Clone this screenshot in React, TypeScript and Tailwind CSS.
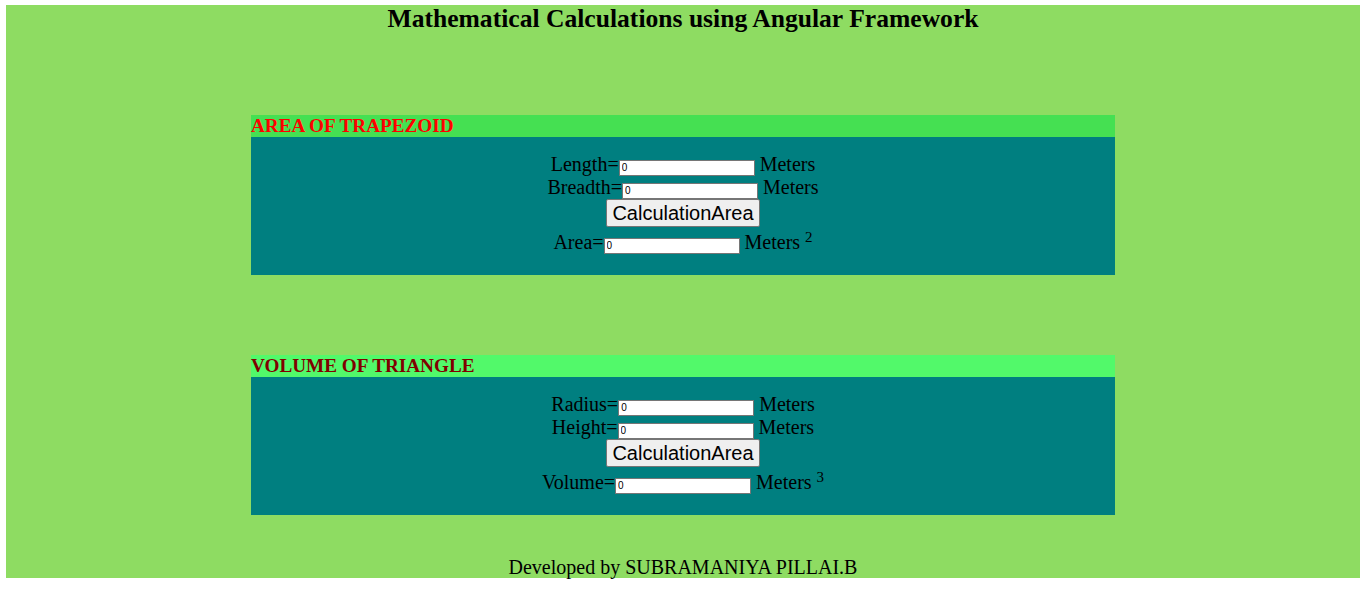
import React from "react";

const serif = "font-['Liberation_Serif','Times_New_Roman',serif]";

type Field = { label: string; unit?: string };

function Row({ label, sup }: { label: string; sup?: string }) {
  return (
    <div className={sup ? "pt-[4px]" : ""}>
      {label}=
      <input
        readOnly
        defaultValue="0"
        className="h-[16px] w-[136px] border border-[#767676] bg-white px-[2px] align-baseline font-['Liberation_Sans',Arial,sans-serif] text-[10px] leading-none text-black outline-none"
      />{" "}
      Meters{sup && <> <sup>{sup}</sup></>}
    </div>
  );
}

function Panel({
  title,
  titleClass,
  headBg,
  fields,
  result,
  power,
}: {
  title: string;
  titleClass: string;
  headBg: string;
  fields: Field[];
  result: string;
  power: string;
}) {
  return (
    <div className="mx-auto w-[864px]">
      <h3 className={`h-[22px] text-[19.2px] font-bold leading-[22px] ${headBg} ${titleClass}`}>
        {title}
      </h3>
      <div className="h-[138px] bg-[#007f80] pt-[16px] text-center text-[20px] leading-[23px] text-black">
        {fields.map((f) => (
          <Row key={f.label} label={f.label} />
        ))}
        <div className="flex h-[28px] justify-center">
          <button className="h-[28px] rounded-[2px] border border-[#767676] bg-[#efefef] px-[5px] font-['Liberation_Sans',Arial,sans-serif] text-[20px] leading-[23px] text-black">
            CalculationArea
          </button>
        </div>
        <Row label={result} sup={power} />
      </div>
    </div>
  );
}

export default function App() {
  return (
    <div className={`min-h-[600px] bg-white px-[6px] pt-[5px] ${serif}`}>
      <div className="h-[573px] bg-[#8edc62]">
        <h2 className="h-[28px] text-center text-[25.6px] font-bold leading-[28px] text-black">
          Mathematical Calculations using Angular Framework
        </h2>
        <div className="mt-[82px]">
          <Panel
            title="AREA OF TRAPEZOID"
            titleClass="text-[#ff0000]"
            headBg="bg-[#45e052]"
            fields={[{ label: "Length" }, { label: "Breadth" }]}
            result="Area"
            power="2"
          />
        </div>
        <div className="mt-[80px]">
          <Panel
            title="VOLUME OF TRIANGLE"
            titleClass="text-[#800000]"
            headBg="bg-[#52f96a]"
            fields={[{ label: "Radius" }, { label: "Height" }]}
            result="Volume"
            power="3"
          />
        </div>
        <p className="mt-[41px] text-center text-[20px] leading-[22px] text-black">
          Developed by SUBRAMANIYA PILLAI.B
        </p>
      </div>
    </div>
  );
}
